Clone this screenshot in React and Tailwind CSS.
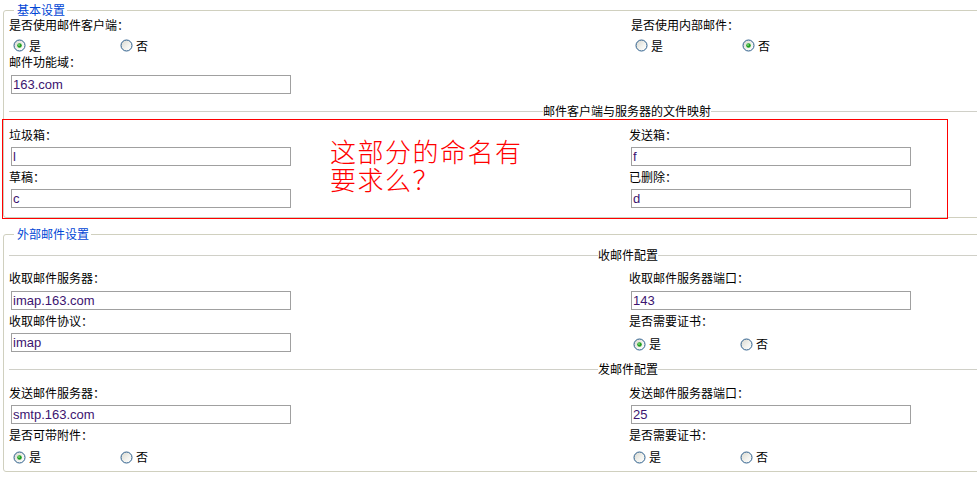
import React, { useId } from "react";

const CJK = "font-['Noto_Sans_CJK_SC',sans-serif]";

function Radio({ on }) {
  const id = useId();
  return (
    <svg width="13" height="13" viewBox="0 0 13 13" className="shrink-0">
      <defs>
        <linearGradient id={id} x1="0" y1="0" x2="1" y2="1">
          <stop offset="0" stopColor="#d6d6ce" />
          <stop offset="0.6" stopColor="#f4f4f0" />
          <stop offset="1" stopColor="#ffffff" />
        </linearGradient>
      </defs>
      <circle cx="6.5" cy="6.5" r="5.5" fill={`url(#${id})`} stroke="#2c5e8c" strokeWidth="1" />
      {on && (
        <>
          <circle cx="6.5" cy="6.5" r="2.3" fill="#1f9e1f" />
          <circle cx="6" cy="6" r="0.9" fill="#7fdc7f" />
        </>
      )}
    </svg>
  );
}

function RadioRow({ value, className = "" }) {
  return (
    <div className={`flex items-center ${className}`}>
      <label className="flex w-[107px] items-center gap-[3px]">
        <Radio on={value === "yes"} />
        <span className="leading-[14px]">是</span>
      </label>
      <label className="flex items-center gap-[3px]">
        <Radio on={value === "no"} />
        <span className="leading-[14px]">否</span>
      </label>
    </div>
  );
}

function Label({ children, className = "" }) {
  return <div className={`leading-[14px] ${className}`}>{children}</div>;
}

function Field({ value }) {
  return (
    <input
      readOnly
      value={value}
      className="ml-[2px] block h-[19px] w-[280px] border border-[#a0a0a0] bg-white px-[1px] font-['Liberation_Sans',sans-serif] text-[13px] leading-[17px] text-[#3c1470] outline-none"
    />
  );
}

function Group({ title, className = "", children }) {
  return (
    <fieldset className={`rounded-[3px] border border-[#d0d0bf] px-[5px] ${className}`}>
      <legend className="ml-[5px] pl-[3px] pr-[2px] text-[12px] leading-[14px] text-[#0046d5]">
        {title}
      </legend>
      {children}
    </fieldset>
  );
}

function SubGroup({ title, offset, className = "", children }) {
  return (
    <fieldset className={`border-0 border-t border-[#d0d0c8] p-0 ${className}`}>
      <legend className={`p-0 text-[12px] leading-[16px] text-black ${offset}`}>{title}</legend>
      {children}
    </fieldset>
  );
}

export default function App() {
  return (
    <div className={`relative h-[498px] w-full overflow-hidden bg-white text-[12px] text-black ${CJK}`}>
      <div className="w-[1250px] pl-[3px] pt-[3px]">
        {/* basic settings */}
        <Group title="基本设置" className="pb-[9px]">
          <div className="mt-[1px] grid grid-cols-[620px_1fr]">
            <div>
              <Label>是否使用邮件客户端：</Label>
              <RadioRow value="yes" className="ml-[4px] mt-[4px] h-[19px]" />
            </div>
            <div className="pl-[2px]">
              <Label>是否使用内部邮件：</Label>
              <RadioRow value="no" className="ml-[4px] mt-[4px] h-[19px]" />
            </div>
          </div>
          <Label className="pb-[6px]">邮件功能域：</Label>
          <Field value="163.com" />

          <SubGroup title="邮件客户端与服务器的文件映射" offset="ml-[534px]" className="mt-[9px]">
            <div className="grid grid-cols-[620px_1fr]">
              <div>
                <Label className="pb-[5px] pt-[9px]">垃圾箱：</Label>
                <Field value="l" />
                <Label className="pb-[5px] pt-[4px]">草稿：</Label>
                <Field value="c" />
              </div>
              <div>
                <Label className="pb-[5px] pt-[9px]">发送箱：</Label>
                <Field value="f" />
                <Label className="pb-[5px] pt-[4px]">已删除：</Label>
                <Field value="d" />
              </div>
            </div>
          </SubGroup>
        </Group>

        {/* external mail settings */}
        <Group title="外部邮件设置" className="mt-[9px] pb-[4px]">
          <SubGroup title="收邮件配置" offset="ml-[589px]" className="mt-[6px]">
            <div className="grid grid-cols-[620px_1fr]">
              <div>
                <Label className="pb-[6px] pt-[8px]">收取邮件服务器：</Label>
                <Field value="imap.163.com" />
                <Label className="pb-[5px] pt-[4px]">收取邮件协议：</Label>
                <Field value="imap" />
              </div>
              <div>
                <Label className="pb-[6px] pt-[8px]">收取邮件服务器端口：</Label>
                <Field value="143" />
                <Label className="pb-[5px] pt-[4px]">是否需要证书：</Label>
                <RadioRow value="yes" className="ml-[4px] h-[22px]" />
              </div>
            </div>
          </SubGroup>

          <SubGroup title="发邮件配置" offset="ml-[589px]" className="mt-[6px]">
            <div className="grid grid-cols-[620px_1fr]">
              <div>
                <Label className="pb-[5px] pt-[9px]">发送邮件服务器：</Label>
                <Field value="smtp.163.com" />
                <Label className="pb-[5px] pt-[4px]">是否可带附件：</Label>
                <RadioRow value="yes" className="ml-[4px] h-[20px]" />
              </div>
              <div>
                <Label className="pb-[5px] pt-[9px]">发送邮件服务器端口：</Label>
                <Field value="25" />
                <Label className="pb-[5px] pt-[4px]">是否需要证书：</Label>
                <RadioRow value={null} className="ml-[4px] h-[20px]" />
              </div>
            </div>
          </SubGroup>
        </Group>
      </div>

      {/* review note drawn over the mapping section */}
      <div className="pointer-events-none absolute left-[2px] top-[119px] h-[100px] w-[946px] border border-[#ff0000]" />
      <div className="pointer-events-none absolute left-[330px] top-[137px] text-[26px] font-light leading-[28px] tracking-[1.5px] text-[#ff0000]">
        <div>这部分的命名有</div>
        <div>要求么？</div>
      </div>
    </div>
  );
}
